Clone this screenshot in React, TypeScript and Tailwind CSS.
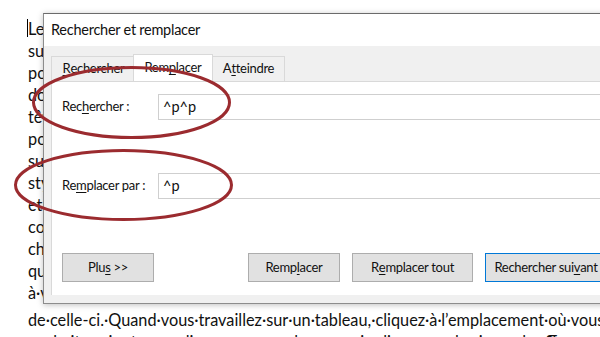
import React from "react";

const docLines = [
  "Les·vidéos·constituent·un·moyen·puissant·pour·illustrer·votre·argument.",
  "sur·Vidéo·en·ligne,·vous·pouvez·coller·le·code·incorporé·de·la·vidéo",
  "pouvez·également·taper·un·mot-clé·pour·rechercher·en·ligne·la·vidéo",
  "document.·Pour·donner·un·aspect·professionnel·à·votre·document,·Word",
  "tête,·de·pied·de·page,·de·page·de·garde·et·de·zone·de·texte·qui",
  "pouvez·ajouter·une·page·de·garde,·un·en-tête·et·une·barre·latérale",
  "sur·Insérer·et·sélectionnez·les·éléments·de·votre·choix·dans·les",
  "styles·vous·permettent·également·de·garder·une·cohérence·dans·votre",
  "et·choisissez·un·nouveau·thème,·les·images,·graphiques·et·SmartArt",
  "correspondre·à·votre·nouveau·thème.·Lorsque·vous·appliquez·des",
  "changent·pour·s’accorder·au·nouveau·thème.·Gagnez·du·temps·dans",
  "qui·s’affichent·là·où·vous·en·avez·besoin.·Pour·modifier·la·façon",
  "à·votre·document,·cliquez·sur·celle-ci·pour·qu’un·bouton·d’options",
];

function U({ children }: { children: React.ReactNode }) {
  return <span className="underline underline-offset-[2px] decoration-1">{children}</span>;
}

function Btn({ children, primary, className }: { children: React.ReactNode; primary?: boolean; className?: string }) {
  return (
    <div
      className={
        "h-[29px] flex items-center justify-center whitespace-pre bg-[#e1e1e1] text-[13px] tracking-[-0.3px] text-[#111] border " +
        (primary ? "border-[#0078d7] " : "border-[#adadad] ") +
        (className ?? "")
      }
    >
      {children}
    </div>
  );
}

export default function App() {
  return (
    <div className="relative w-[600px] h-[337px] overflow-hidden bg-white">
      {/* document */}
      <div
        className="pl-[28px] pt-[18px] text-[16.3px] leading-[22px] text-[#111] whitespace-nowrap"
        style={{ fontFamily: "Lato, 'Noto Sans', sans-serif" }}
      >
        {docLines.map((l, i) => (
          <div key={i} className="h-[22px]">
            {l}
          </div>
        ))}
        <div className="h-[22px] mt-[5px]">
          de·celle-ci.·Quand·vous·travaillez·sur·un·tableau,·cliquez·à·l’emplacement·où·vous
        </div>
        <div className="h-[22px]">
          souhaitez·ajouter·une·ligne·ou·une·colonne,·puis·cliquez·sur·le·signe·plus.¶
        </div>
      </div>
      {/* cursor */}
      <div className="absolute left-[27px] top-[19px] w-[1px] h-[18px] bg-black" />

      {/* dialog */}
      <div
        className="absolute left-[43px] top-[13px] w-[600px] h-[291px] flex flex-col bg-[#f0f0f0] border-l border-t border-b border-[#8c8c8c] border-t-[#6b6b6b] shadow-[0_1px_6px_rgba(0,0,0,0.25)]"
        style={{ fontFamily: "Lato, 'Noto Sans', sans-serif" }}
      >
        <div className="h-[32px] shrink-0 bg-white flex items-center pl-[7px] text-[14.5px] tracking-[-0.25px] text-[#111]">
          Rechercher et remplacer
        </div>
        <div className="flex-1 bg-[#f0f0f0] pl-[7px] pt-[8px] flex flex-col">
          <div className="flex items-end h-[27px] text-[13px] tracking-[-0.3px] text-[#111]">
            <div className="h-[25px] w-[82px] border-t border-l border-[#d9d9d9] flex items-center justify-center pl-[2px]">
              <U>R</U>echercher
            </div>
            <div className="h-[27px] w-[80px] bg-white border-t border-l border-r border-[#d9d9d9] flex items-center justify-center">
              Rem<U>p</U>lacer
            </div>
            <div className="h-[25px] w-[72px] border-t border-r border-[#d9d9d9] flex items-center justify-center">
              A<U>t</U>teindre
            </div>
          </div>
          <div className="h-[214px] bg-white border-t border-l border-[#d9d9d9] flex flex-col pl-[10px] pt-[12px] text-[13px] tracking-[-0.3px] text-[#111]">
            <div className="flex items-center h-[26px]">
              <div className="w-[96px]">
                Rec<U>h</U>ercher :
              </div>
              <div className="flex-1 h-[26px] border border-[#cfcfcf] flex items-center pl-[4px] text-[14.5px] tracking-normal">^p^p</div>
            </div>
            <div className="flex items-center h-[26px] mt-[53px]">
              <div className="w-[96px]">
                Re<U>m</U>placer par :
              </div>
              <div className="flex-1 h-[26px] border border-[#cfcfcf] flex items-center pl-[4px] text-[14.5px] tracking-normal">^p</div>
            </div>
            <div className="flex mt-[54px] gap-[12px]">
              <Btn className="w-[92px]">
                Plu<U>s</U>{" >>"}
              </Btn>
              <Btn className="w-[92px] ml-[82px]">
                Remp<U>l</U>acer
              </Btn>
              <Btn className="w-[121px]">
                R<U>e</U>mplacer tout
              </Btn>
              <Btn primary className="w-[122px]">
                Rechercher sui<U>v</U>ant
              </Btn>
            </div>
          </div>
        </div>
      </div>

      {/* annotations */}
      <svg className="absolute inset-0" width="600" height="337" viewBox="0 0 600 337">
        <ellipse cx="131.5" cy="102.5" rx="98" ry="35" fill="none" stroke="#9b2b2f" strokeWidth="3" />
        <ellipse cx="123.5" cy="185" rx="108" ry="34.5" fill="none" stroke="#9b2b2f" strokeWidth="3" />
      </svg>
    </div>
  );
}
